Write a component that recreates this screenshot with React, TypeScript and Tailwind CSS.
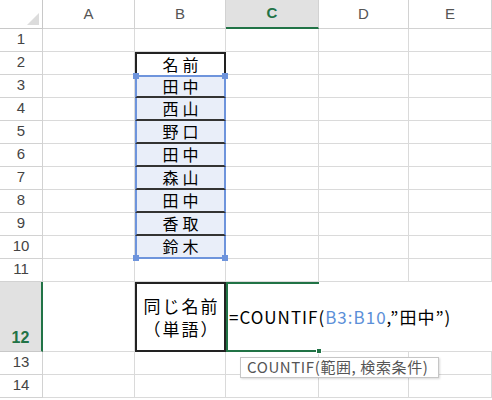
import React from "react";

const cols = ["A", "B", "C", "D", "E"];
const names = ["田中", "西山", "野口", "田中", "森山", "田中", "香取", "鈴木"];

const cellFont = { fontFamily: '"Noto Sans CJK JP", "Noto Sans", sans-serif' };
const headFont = { fontFamily: '"Liberation Sans", "Noto Sans", sans-serif' };

function RowHead({ n, active }: { n: number; active?: boolean }) {
  return (
    <div
      className={
        active
          ? "flex items-end justify-center pb-[1px] bg-[#e1e1e1] border-r-2 border-r-[#217346] border-b border-b-[#c8c8c8] text-[16px] font-bold text-[#217346]"
          : "flex items-end justify-center pb-[1px] border-r border-b border-[#d2d2d2] text-[15px] text-[#444]"
      }
      style={headFont}
    >
      {n}
    </div>
  );
}

function Blank({ noRight }: { noRight?: boolean }) {
  return <div className={noRight ? "border-b border-[#dadada]" : "border-r border-b border-[#dadada]"} />;
}

function Handle({ pos }: { pos: string }) {
  return <div className={"absolute w-[6px] h-[6px] bg-[#6e94dc] " + pos} />;
}

function NameCell({ i, name }: { i: number; name: string }) {
  const first = i === 0;
  const last = i === names.length - 1;
  return (
    <div
      className={
        first
          ? "relative flex items-center justify-center pl-[4px] bg-[#e9eef9] border-x-2 border-x-[#6e94dc] border-t-2 border-t-[#6e94dc] border-b-2 border-b-[#333] text-[16px] tracking-[4px] text-black leading-[17px]"
          : last
          ? "relative flex items-center justify-center pl-[4px] bg-[#e9eef9] border-x-2 border-b-2 border-[#6e94dc] text-[16px] tracking-[4px] text-black leading-[17px]"
          : "relative flex items-center justify-center pl-[4px] bg-[#e9eef9] border-x-2 border-b-2 border-x-[#6e94dc] border-b-[#333] text-[16px] tracking-[4px] text-black leading-[17px]"
      }
      style={cellFont}
    >
      <span>{name}</span>
      {first && <Handle pos="-left-[4px] -top-[4px]" />}
      {first && <Handle pos="-right-[4px] -top-[4px]" />}
      {last && <Handle pos="-left-[4px] -bottom-[4px]" />}
      {last && <Handle pos="-right-[4px] -bottom-[4px]" />}
    </div>
  );
}

export default function App() {
  const cells: React.ReactNode[] = [];

  // header row
  cells.push(
    <div key="corner" className="flex items-end justify-end p-[3px] border-r border-b border-[#c8c8c8]">
      <svg width="12" height="12" viewBox="0 0 12 12">
        <polygon points="12,0 12,12 0,12" fill="#dcdcdc" />
      </svg>
    </div>
  );
  cols.forEach((c) => {
    cells.push(
      <div
        key={"h" + c}
        className={
          c === "C"
            ? "flex items-center justify-center bg-[#e1e1e1] border-r border-[#d2d2d2] border-b-2 border-b-[#217346] text-[15px] font-bold text-[#217346]"
            : "flex items-center justify-center border-r border-b border-[#d2d2d2] text-[15px] text-[#555]"
        }
        style={headFont}
      >
        {c}
      </div>
    );
  });

  for (let r = 1; r <= 14; r++) {
    const active = r === 12;
    cells.push(<RowHead key={"r" + r} n={r} active={active} />);
    cells.push(<Blank key={"a" + r} />);
    if (r === 2) {
      cells.push(
        <div
          key={"b" + r}
          className="flex items-center justify-center pl-[4px] border-t-2 border-x-2 border-[#222] text-[16px] tracking-[4px] text-black leading-[17px]"
          style={cellFont}
        >
          名前
        </div>
      );
    } else if (r >= 3 && r <= 10) {
      cells.push(<NameCell key={"b" + r} i={r - 3} name={names[r - 3]} />);
    } else if (active) {
      cells.push(
        <div
          key={"b" + r}
          className="flex flex-col items-center justify-center pl-[2px] border-2 border-[#222] text-[17px] tracking-[2px] text-black leading-[23px]"
          style={cellFont}
        >
          <span>同じ名前</span>
          <span>（単語）</span>
        </div>
      );
    } else {
      cells.push(<Blank key={"b" + r} />);
    }
    if (active) {
      cells.push(
        <div
          key={"c" + r}
          className="relative z-10 flex items-center border-l-2 border-t-2 border-b-2 border-[#217346] pl-[1px] text-[17px] text-black whitespace-nowrap tracking-[1px]"
          style={cellFont}
        >
          <span>
            =COUNTIF(<span className="text-[#5b8fd8]">B3:B10</span>,”田中”)
          </span>
          <div className="absolute -right-[3px] -bottom-[4px] w-[6px] h-[6px] bg-[#217346] border border-white" />
          {/* function tooltip */}
          <div
            className="absolute left-[12px] top-[73px] flex items-center w-[199px] h-[21px] px-[6px] bg-white border border-[#c6c6c6] shadow-[1px_1px_2px_rgba(0,0,0,0.15)] text-[15px] tracking-[0.6px] text-[#555]"
            style={cellFont}
          >
            COUNTIF(範囲, 検索条件)
          </div>
        </div>
      );
    } else {
      cells.push(<Blank key={"c" + r} />);
    }
    cells.push(<Blank key={"d" + r} noRight={active} />);
    cells.push(<Blank key={"e" + r} noRight={active} />);
  }

  return (
    <div className="w-[492px] h-[400px] overflow-hidden bg-white">
      <div className="grid grid-cols-[43px_92px_91px_93px_90px_83px] grid-rows-[29px_repeat(11,23px)_70px_23px_23px]">
        {cells}
      </div>
    </div>
  );
}
